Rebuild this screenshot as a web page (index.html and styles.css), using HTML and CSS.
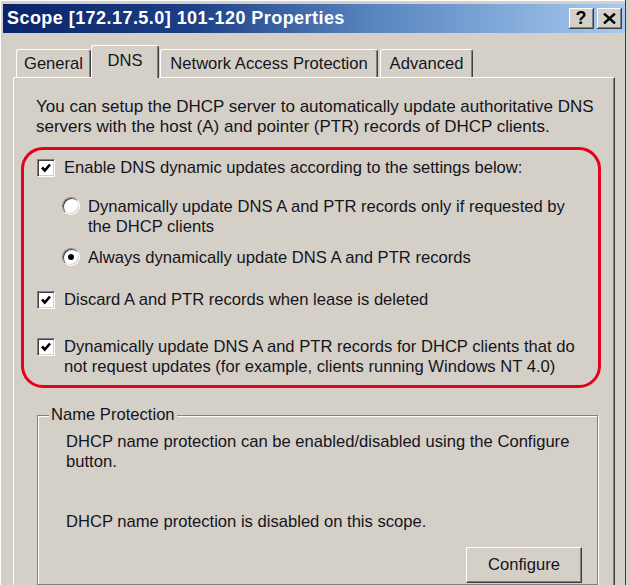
FILE: index.html
```html
<!DOCTYPE html>
<html>
<head>
<meta charset="utf-8">
<link rel="stylesheet" href="styles.css">
</head>
<body>
<div class="window">
  <div class="titlebar">
    <span class="title">Scope [172.17.5.0] 101-120 Properties</span>
    <div class="tbtns">
      <div class="tbtn help">?</div>
      <div class="tbtn close"><svg width="13" height="11" viewBox="0 0 13 11"><path d="M1 0.5 L12 10.5 M12 0.5 L1 10.5" stroke="#000" stroke-width="2.4" fill="none"/></svg></div>
    </div>
  </div>
  <div class="tabs">
    <div class="tab t-general">General</div>
    <div class="tab t-dns active">DNS</div>
    <div class="tab t-nap">Network Access Protection</div>
    <div class="tab t-adv">Advanced</div>
  </div>
  <div class="panel">
    <p class="intro">You can setup the DHCP server to automatically update authoritative DNS<br>servers with the host (A) and pointer (PTR) records of DHCP clients.</p>
    <div class="highlight">
      <div class="opt r1">
        <span class="cb"><svg width="14" height="14" viewBox="0 0 14 14"><path d="M3 6.5 L5.8 9.5 L11 3.5" stroke="#000" stroke-width="2.6" fill="none"/></svg></span>
        <span class="lbl">Enable DNS dynamic updates according to the settings below:</span>
      </div>
      <div class="opt radio-row r2">
        <span class="rb"></span>
        <span class="lbl">Dynamically update DNS A and PTR records only if requested by<br>the DHCP clients</span>
      </div>
      <div class="opt radio-row r3">
        <span class="rb on"><span class="dot"></span></span>
        <span class="lbl">Always dynamically update DNS A and PTR records</span>
      </div>
      <div class="opt r4">
        <span class="cb"><svg width="14" height="14" viewBox="0 0 14 14"><path d="M3 6.5 L5.8 9.5 L11 3.5" stroke="#000" stroke-width="2.6" fill="none"/></svg></span>
        <span class="lbl">Discard A and PTR records when lease is deleted</span>
      </div>
      <div class="opt r5">
        <span class="cb"><svg width="14" height="14" viewBox="0 0 14 14"><path d="M3 6.5 L5.8 9.5 L11 3.5" stroke="#000" stroke-width="2.6" fill="none"/></svg></span>
        <span class="lbl">Dynamically update DNS A and PTR records for DHCP clients that do<br>not request updates (for example, clients running Windows NT 4.0)</span>
      </div>
    </div>
    <fieldset class="group">
      <legend>Name Protection</legend>
      <div class="gbody">
        <p class="g1">DHCP name protection can be enabled/disabled using the Configure<br>button.</p>
        <p class="g2">DHCP name protection is disabled on this scope.</p>
        <div class="btn">Configure</div>
      </div>
    </fieldset>
  </div>
</div>
</body>
</html>
```
FILE: styles.css
```css
* { box-sizing: border-box; }
html, body { margin: 0; padding: 0; }
body {
  width: 629px;
  height: 585px;
  overflow: hidden;
  background: #d4d0c8;
  font-family: "Liberation Sans", Arial, sans-serif;
  font-size: 16.6px;
  color: #141420;
}
.window {
  width: 626px;
  height: 585px;
  display: flex;
  flex-direction: column;
  padding: 4px 0 0 3px;
  border-right: 1px solid #404040;
  box-shadow: inset 1px 1px #ffffff;
}
.titlebar {
  height: 29px;
  display: flex;
  align-items: center;
  justify-content: space-between;
  padding: 0 3px 0 4px;
  background: linear-gradient(to right, #0a246a 0%, #1c3f85 30%, #5a86c0 60%, #a6caf0 100%);
}
.title {
  color: #fff;
  font-weight: bold;
  font-size: 18px;
  letter-spacing: 0.45px;
}
.tbtns { display: flex; gap: 3px; }
.tbtn {
  width: 25px;
  height: 21px;
  background: #d4d0c8;
  display: flex;
  align-items: center;
  justify-content: center;
  border-right: 1px solid #404040;
  border-bottom: 1px solid #404040;
  box-shadow: inset 1px 1px #ffffff, inset -1px -1px #808080;
  font-weight: bold;
  font-size: 18px;
  color: #000;
}
.tabs {
  display: flex;
  align-items: flex-end;
  height: 32px;
  margin-top: 12px;
  padding-left: 13px;
}
.tab {
  height: 28px;
  display: flex;
  align-items: center;
  justify-content: center;
  background: #d4d0c8;
  border-top: 1px solid #ffffff;
  border-left: 1px solid #ffffff;
  border-right: 1px solid #404040;
  border-radius: 3px 3px 0 0;
  box-shadow: inset -1px 0 #808080;
}
.t-general { width: 75px; }
.t-dns { width: 68px; }
.t-nap { width: 218px; margin-left: 1px; }
.t-adv { width: 93px; margin-left: 2px; }
.tab.active {
  height: 33px;
  margin-bottom: -1px;
  padding-bottom: 3px;
  position: relative;
  z-index: 2;
}
.panel {
  flex: 1;
  margin: 0 10px;
  border-top: 1px solid #ffffff;
  border-left: 1px solid #ffffff;
  border-right: 1px solid #404040;
  box-shadow: inset -1px 0 #808080;
  padding-top: 19px;
  display: flex;
  flex-direction: column;
  position: relative;
  z-index: 1;
}
.intro {
  margin: 0 0 0 22px;
  line-height: 20px;
  font-size: 17px;
}
.highlight {
  margin: 10px 13px 0 7px;
  border: 3px solid #e5001c;
  border-radius: 22px;
  padding: 8px 0 8px 13px;
}
.opt {
  display: flex;
  align-items: flex-start;
  gap: 9px;
  line-height: 20px;
}
.radio-row { margin-left: 25px; gap: 8px; }
.r2 { margin-top: 19px; }
.r3 { margin-top: 11px; }
.r4 { margin-top: 22px; }
.r5 { margin-top: 27px; }
.cb {
  flex: none;
  width: 18px;
  height: 18px;
  margin-top: 1px;
  background: #fff;
  border-top: 1px solid #808080;
  border-left: 1px solid #808080;
  border-right: 1px solid #ffffff;
  border-bottom: 1px solid #ffffff;
  box-shadow: inset 1px 1px #404040, inset -1px -1px #d4d0c8;
  display: flex;
  align-items: center;
  justify-content: center;
}
.rb {
  flex: none;
  width: 18px;
  height: 18px;
  margin-top: 0;
  border-radius: 50%;
  background: #fff;
  border: 1px solid;
  border-color: #808080 #ffffff #ffffff #808080;
  box-shadow: inset 1px 1px #404040, inset -1px -1px #d4d0c8;
  display: flex;
  align-items: center;
  justify-content: center;
}
.dot {
  width: 6px;
  height: 6px;
  border-radius: 50%;
  background: #000;
}
.group {
  margin: 17px 16px 0 23px;
  padding: 0;
  border: 1px solid #808080;
  box-shadow: inset 1px 1px #ffffff, 1px 1px #ffffff;
  flex: 1;
  min-width: 0;
}
.group legend {
  margin-left: 11px;
  padding: 0 2px;
  line-height: 20px;
  background: #d4d0c8;
}
.gbody {
  display: flex;
  flex-direction: column;
  padding-left: 28px;
  padding-right: 15px;
}
.gbody p { margin: 0; line-height: 20px; }
.g1 { margin-top: 7px !important; }
.g2 { margin-top: 40px !important; }
.btn {
  align-self: flex-end;
  margin-top: 15px;
  width: 116px;
  height: 36px;
  display: flex;
  align-items: center;
  justify-content: center;
  background: #d4d0c8;
  border-top: 1px solid #ffffff;
  border-left: 1px solid #ffffff;
  border-right: 1px solid #404040;
  border-bottom: 1px solid #404040;
  box-shadow: inset -1px -1px #808080;
}
```
